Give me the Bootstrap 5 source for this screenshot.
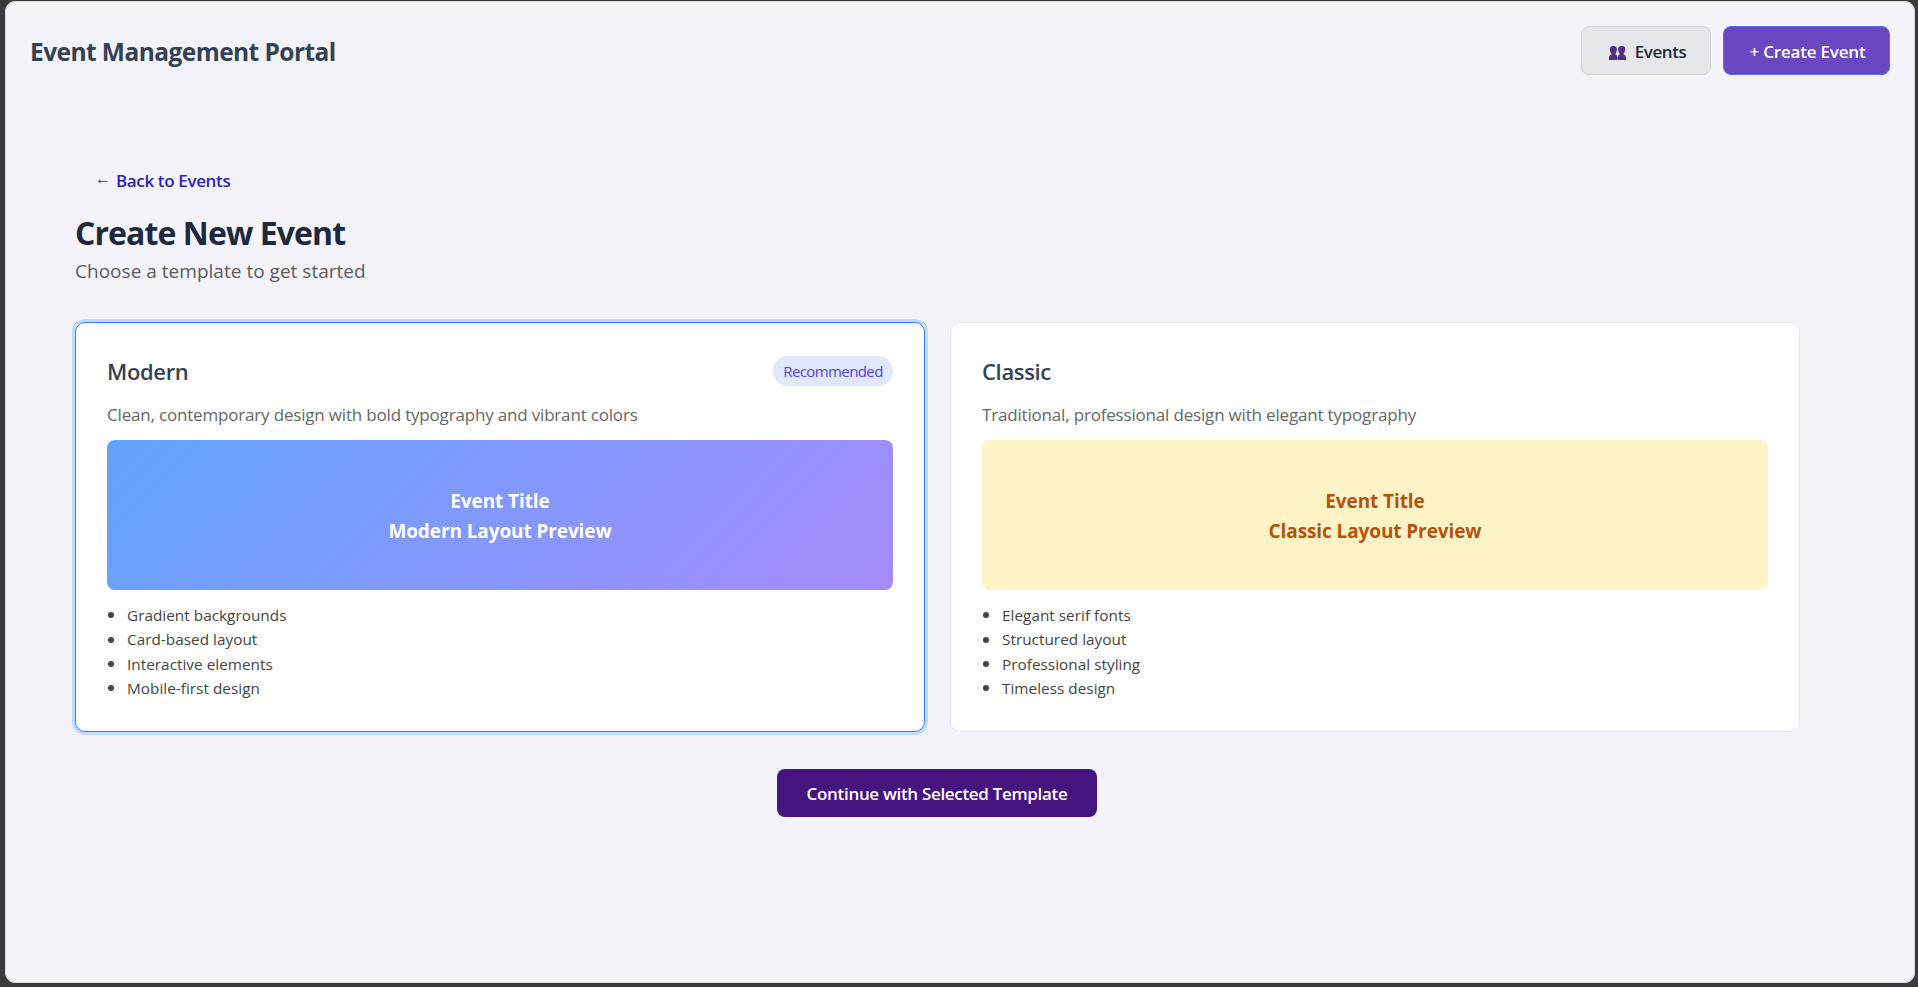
<!DOCTYPE html>
<html lang="en">
<head>
<meta charset="utf-8">
<title>Event Management Portal</title>
<link href="https://cdn.jsdelivr.net/npm/bootstrap@5.3.0/dist/css/bootstrap.min.css" rel="stylesheet">
<style>
html,body{height:100%}
body{background:#3a3a3a;font-family:"Open Sans","Noto Sans",sans-serif;padding:1px 3px 4px 5px;overflow:hidden}
.shell{background:#f4f3fa;border-radius:11px;height:982px;box-shadow:inset 0 0 0 1px #d9d8dd}
.topbar{padding:25px 25px 0 25px;height:74px}
.brand-title{font-size:24.5px;line-height:51px;font-weight:700;color:#334155;white-space:nowrap;letter-spacing:-.56px}
.tbtn-group{gap:12px}
.tbtn{height:49px;border-radius:8px;font-size:17px;font-weight:600;padding:2px 0 0;white-space:nowrap;line-height:1}
.tbtn-events{width:130px;background:#e5e7eb;border:1px solid #d1d5db;color:#1f2937;letter-spacing:-.45px;gap:9px;padding-left:3px}
.tbtn-events svg{margin-top:3px}
.tbtn-create{width:167px;background:#6b46c1;border:1px solid #6366f1;color:#fff;letter-spacing:-.2px;padding-left:2px}
.page{padding:90px 115px 0 70px}
.backlink{font-size:17px;line-height:31px;font-weight:600;color:#2a1fc4;padding-left:20px;letter-spacing:-.36px}
.back-arrow{width:21px;line-height:1;font-family:"Liberation Sans",sans-serif;font-weight:400;font-size:16px;padding-bottom:3px}
.page-title{font-size:32px;line-height:42px;font-weight:700;color:#1e293b;letter-spacing:-.92px}
.page-sub{font-size:19px;line-height:35px;color:#5b5b5b;letter-spacing:.02px}
.templates{margin-top:33px;gap:25px}
.tpl{flex:1 1 0;height:410px;border-radius:10px;border:1px solid #e2e8f0;padding:33px 31px 0}
.tpl-selected{border-color:#3b82f6;box-shadow:0 0 0 3px #bfdbfe}
.tpl-name{font-size:22px;line-height:30px;font-weight:600;color:#334155;letter-spacing:-.35px}
.tpl-desc{font-size:17px;line-height:28px;margin-top:15px;color:#666;letter-spacing:-.18px}
.pill{width:120px;height:30px;line-height:30px;font-size:15px;color:#4f46e5;background:#e0e7ff;letter-spacing:-.6px}
.preview{height:150px;margin-top:11px;padding-top:2px;border-radius:8px;font-size:19px;line-height:30px;font-weight:700;color:#fff;background:linear-gradient(135deg,#60a5fa,#a78bfa);letter-spacing:-.1px}
.preview-classic{background:#fef3c7;color:#b45309}
.feats{margin-top:13px;font-size:15.3px;line-height:24.4px;color:#444;letter-spacing:.03px}
.feats li{display:flex;align-items:center}
.feats li::before{content:"";width:6px;height:6px;border-radius:50%;background:#444;margin:0 13px 0 1px}
.continue{width:320px;height:48px;margin:37px 1px 0 0;border-radius:8px;background:#46147e;color:#fff;font-size:17px;font-weight:600;padding:2px 0 0;letter-spacing:-.32px}
</style>
</head>
<body>
<div class="shell">
  <header class="topbar d-flex justify-content-between align-items-start">
    <div class="brand-title">Event Management Portal</div>
    <div class="tbtn-group d-flex">
      <button class="btn tbtn tbtn-events d-flex align-items-center justify-content-center"><svg width="17" height="14" viewBox="0 0 17 14" fill="#53307f"><path d="M.8 3.200Q.8 0 4.300 0T7.900 3.200Q7.900 5.700 6.500 7.300V8.500Q8.500 9 8.500 11v3H0v-3Q0 9 2.300 8.500V7.300Q.8 5.700.8 3.200z"/><path d="M9.100 3.200Q9.100 0 12.700 0T16.200 3.200Q16.200 5.700 14.700 7.300V8.500Q17 9 17 11v3H8.800v-3Q8.800 9 10.600 8.500V7.300Q9.100 5.700 9.100 3.200z"/></svg><span>Events</span></button>
      <button class="btn tbtn tbtn-create">+ Create Event</button>
    </div>
  </header>
  <main class="page">
    <div class="backlink d-flex align-items-center"><span class="back-arrow">←</span>Back to Events</div>
    <h1 class="page-title mt-3 mb-0">Create New Event</h1>
    <p class="page-sub mb-0">Choose a template to get started</p>
    <div class="templates d-flex">
      <section class="tpl tpl-selected bg-white">
        <div class="d-flex justify-content-between"><h2 class="tpl-name mb-0">Modern</h2><span class="pill rounded-pill text-center">Recommended</span></div>
        <p class="tpl-desc mb-0">Clean, contemporary design with bold typography and vibrant colors</p>
        <div class="preview d-flex flex-column align-items-center justify-content-center"><span>Event Title</span><span>Modern Layout Preview</span></div>
        <ul class="feats list-unstyled mb-0"><li>Gradient backgrounds</li><li>Card-based layout</li><li>Interactive elements</li><li>Mobile-first design</li></ul>
      </section>
      <section class="tpl bg-white">
        <h2 class="tpl-name mb-0">Classic</h2>
        <p class="tpl-desc mb-0">Traditional, professional design with elegant typography</p>
        <div class="preview preview-classic d-flex flex-column align-items-center justify-content-center"><span>Event Title</span><span>Classic Layout Preview</span></div>
        <ul class="feats list-unstyled mb-0"><li>Elegant serif fonts</li><li>Structured layout</li><li>Professional styling</li><li>Timeless design</li></ul>
      </section>
    </div>
    <div class="text-center"><button class="btn continue">Continue with Selected Template</button></div>
  </main>
</div>
<script src="https://cdn.jsdelivr.net/npm/bootstrap@5.3.0/dist/js/bootstrap.bundle.min.js"></script>
</body>
</html>
